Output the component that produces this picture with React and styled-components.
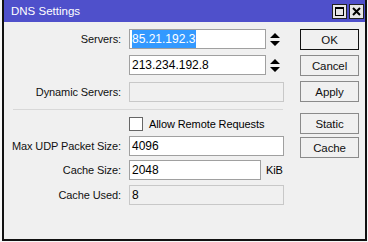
import styled, { createGlobalStyle } from "styled-components";

const GlobalStyle = createGlobalStyle`
  html, body {
    margin: 0;
    padding: 0;
    background: #f7f7f7;
  }
  body {
    font-family: "Liberation Sans", Arial, sans-serif;
    font-size: 11px;
    letter-spacing: -0.1px;
    color: #000;
  }
`;

const Window = styled.div`
  width: 361px;
  height: 239px;
  margin-left: 2px;
  border-left: 2px solid #111;
  border-right: 2px solid #111;
  border-bottom: 2px solid #111;
  background: #f0f0f0;
  display: flex;
  flex-direction: column;
`;

const TitleBar = styled.div`
  height: 22px;
  background: #4f50cb;
  display: flex;
  align-items: center;
  justify-content: space-between;
  padding: 0 1px 0 7px;
  color: #fff;
  font-size: 11.5px;
  letter-spacing: 0;
`;

const TitleButtons = styled.div`
  display: flex;
  gap: 2px;
`;

const TitleButton = styled.div`
  width: 13px;
  height: 13px;
  background: #e6e6e6;
  border: 1px solid #222;
  display: flex;
  align-items: center;
  justify-content: center;
`;

const Body = styled.div`
  flex: 1;
  display: flex;
  padding: 7px 6px 0 0;
`;

const Form = styled.div`
  width: 290px;
  display: flex;
  flex-direction: column;
`;

const Row = styled.div`
  display: flex;
  align-items: center;
  height: 20px;
  margin-top: ${(p) => p.$gap || 0}px;
`;

const Label = styled.div`
  width: 117px;
  text-align: right;
  padding-right: 8px;
  color: #111;
  white-space: nowrap;
`;

const Field = styled.div`
  width: ${(p) => p.$width}px;
  height: 18px;
  box-sizing: content-box;
  border: 1px solid ${(p) => (p.$disabled ? "#c8c8c8" : "#a0a0a0")};
  background: ${(p) => (p.$disabled ? "#f0f0f0" : "#fff")};
  display: flex;
  align-items: center;
  padding-left: 2px;
  color: #000;
  font-size: 12px;
  letter-spacing: 0;
  white-space: nowrap;
`;

const Selected = styled.span`
  background: #3399ff;
  color: #fff;
  padding: 2px 1px 2px 0;
`;

const Spin = styled.div`
  width: 18px;
  display: flex;
  justify-content: center;
`;

const Unit = styled.span`
  margin-left: 5px;
`;

const Separator = styled.div`
  height: 1px;
  background: #d8d8d8;
  margin: 7px 0 0 9px;
  width: 270px;
`;

const CheckRow = styled.label`
  display: flex;
  align-items: center;
  margin: 7px 0 0 125px;
  height: 14px;
`;

const Box = styled.span`
  width: 12px;
  height: 12px;
  border: 1px solid #666;
  background: #fff;
  margin-right: 6px;
`;

const Buttons = styled.div`
  display: flex;
  flex-direction: column;
  margin-left: 6px;
`;

const Button = styled.div`
  width: 57px;
  height: 19px;
  border: 1px solid ${(p) => (p.$primary ? "#111" : "#8a8a8a")};
  background: #f0f0f0;
  display: flex;
  align-items: center;
  justify-content: center;
  margin-top: ${(p) => p.$gap || 0}px;
  color: #111;
  font-size: 11.5px;
`;

const SpinIcon = () => (
  <svg width="10" height="13" viewBox="0 0 10 13">
    <path d="M5 0 L10 5 L0 5 Z M0 8 L10 8 L5 13 Z" fill="#000" />
  </svg>
);

export default function App() {
  return (
    <>
      <GlobalStyle />
      <Window>
        <TitleBar>
          <span>DNS Settings</span>
          <TitleButtons>
            <TitleButton>
              <svg width="9" height="9" viewBox="0 0 9 9">
                <rect x="0.5" y="0.5" width="8" height="8" fill="none" stroke="#000" />
                <rect x="0" y="0" width="9" height="2" fill="#000" />
              </svg>
            </TitleButton>
            <TitleButton>
              <svg width="9" height="9" viewBox="0 0 9 9">
                <path d="M1 1 L8 8 M8 1 L1 8" stroke="#000" strokeWidth="2" />
              </svg>
            </TitleButton>
          </TitleButtons>
        </TitleBar>
        <Body>
          <Form>
            <Row>
              <Label>Servers:</Label>
              <Field $width={133}>
                <Selected>85.21.192.3</Selected>
              </Field>
              <Spin>
                <SpinIcon />
              </Spin>
            </Row>
            <Row $gap={6}>
              <Label />
              <Field $width={133}>213.234.192.8</Field>
              <Spin>
                <SpinIcon />
              </Spin>
            </Row>
            <Row $gap={7}>
              <Label>Dynamic Servers:</Label>
              <Field $width={151} $disabled />
            </Row>
            <Separator />
            <CheckRow>
              <Box />
              Allow Remote Requests
            </CheckRow>
            <Row $gap={5}>
              <Label>Max UDP Packet Size:</Label>
              <Field $width={151}>4096</Field>
            </Row>
            <Row $gap={4}>
              <Label>Cache Size:</Label>
              <Field $width={128}>2048</Field>
              <Unit>KiB</Unit>
            </Row>
            <Row $gap={5}>
              <Label>Cache Used:</Label>
              <Field $width={151} $disabled>8</Field>
            </Row>
          </Form>
          <Buttons>
            <Button $primary>OK</Button>
            <Button $gap={5}>Cancel</Button>
            <Button $gap={5}>Apply</Button>
            <Button $gap={11}>Static</Button>
            <Button $gap={3}>Cache</Button>
          </Buttons>
        </Body>
      </Window>
    </>
  );
}
